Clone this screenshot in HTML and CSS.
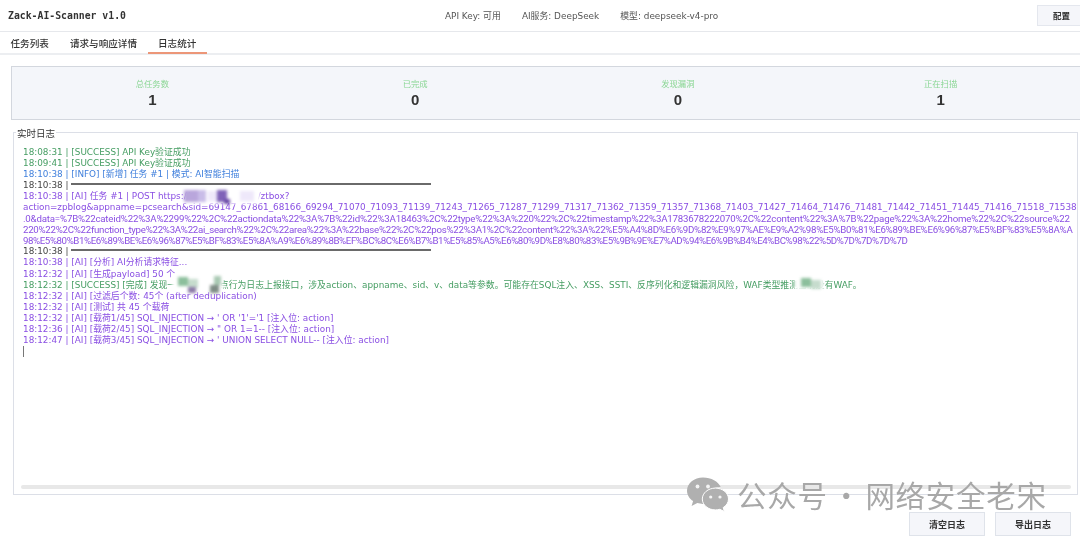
FILE: index.html
```html
<!DOCTYPE html>
<html lang="zh-CN">
<head>
<meta charset="utf-8">
<title>Zack-AI-Scanner v1.0</title>
<link rel="stylesheet" href="styles.css">
</head>
<body>
<div class="app">
  <header class="topbar">
    <h1 class="title">Zack-AI-Scanner v1.0</h1>
    <div class="status">
      <span class="status-item">API Key: 可用</span>
      <span class="status-item">AI服务: DeepSeek</span>
      <span class="status-item">模型: deepseek-v4-pro</span>
    </div>
    <button class="btn btn-config">配置</button>
  </header>
  <nav class="tabs">
    <span class="tab">任务列表</span>
    <span class="tab">请求与响应详情</span>
    <span class="tab tab-active">日志统计</span>
  </nav>
  <main class="content">
    <section class="stats">
      <div class="stat"><div class="stat-label">总任务数</div><div class="stat-value">1</div></div>
      <div class="stat"><div class="stat-label">已完成</div><div class="stat-value">0</div></div>
      <div class="stat"><div class="stat-label">发现漏洞</div><div class="stat-value">0</div></div>
      <div class="stat"><div class="stat-label">正在扫描</div><div class="stat-value">1</div></div>
    </section>
    <fieldset class="logbox">
      <legend class="logbox-title">实时日志</legend>
      <div class="log">
        <div class="line green">18:08:31 | [SUCCESS] API Key验证成功</div>
        <div class="line green">18:09:41 | [SUCCESS] API Key验证成功</div>
        <div class="line blue">18:10:38 | [INFO] [新增] 任务 #1 | 模式: AI智能扫描</div>
        <div class="line dark">18:10:38 | <span class="rule"></span></div>
        <div class="line purple">18:10:38 | [AI] 任务 #1 | POST https://a.example.com/ztbox?</div>
        <div class="line purple url-query">action=zpblog&amp;appname=pcsearch&amp;sid=69147_67861_68166_69294_71070_71093_71139_71243_71265_71287_71299_71317_71362_71359_71357_71368_71403_71427_71464_71476_71481_71442_71451_71445_71416_71518_71538</div>
        <div class="line purple enc enc-a">.0&amp;data=%7B%22cateid%22%3A%2299%22%2C%22actiondata%22%3A%7B%22id%22%3A18463%2C%22type%22%3A%220%22%2C%22timestamp%22%3A1783678222070%2C%22content%22%3A%7B%22page%22%3A%22home%22%2C%22source%22</div>
        <div class="line purple enc enc-b">220%22%2C%22function_type%22%3A%22ai_search%22%2C%22area%22%3A%22base%22%2C%22pos%22%3A1%2C%22content%22%3A%22%E5%A4%8D%E6%9D%82%E9%97%AE%E9%A2%98%E5%B0%81%E6%89%BE%E6%96%87%E5%BF%83%E5%8A%A</div>
        <div class="line purple enc enc-c">98%E5%80%B1%E6%89%BE%E6%96%87%E5%BF%83%E5%8A%A9%E6%89%8B%EF%BC%8C%E6%B7%B1%E5%85%A5%E6%80%9D%E8%80%83%E5%9B%9E%E7%AD%94%E6%9B%B4%E4%BC%98%22%5D%7D%7D%7D%7D</div>
        <div class="line dark">18:10:38 | <span class="rule"></span></div>
        <div class="line purple">18:10:38 | [AI] [分析] AI分析请求特征...</div>
        <div class="line purple">18:12:32 | [AI] [生成payload] 50 个</div>
        <div class="line green">18:12:32 | [SUCCESS] [完成] 发现一个AI 搜 索 点行为日志上报接口，涉及action、appname、sid、v、data等参数。可能存在SQL注入、XSS、SSTI、反序列化和逻辑漏洞风险，WAF类型推测当前没有WAF。</div>
        <div class="line purple">18:12:32 | [AI] [过滤后个数: 45个 (after deduplication)</div>
        <div class="line purple">18:12:32 | [AI] [测试] 共 45 个载荷</div>
        <div class="line purple">18:12:32 | [AI] [载荷1/45] SQL_INJECTION → ' OR '1'='1 [注入位: action]</div>
        <div class="line purple">18:12:36 | [AI] [载荷2/45] SQL_INJECTION → " OR 1=1-- [注入位: action]</div>
        <div class="line purple">18:12:47 | [AI] [载荷3/45] SQL_INJECTION → ' UNION SELECT NULL-- [注入位: action]</div>
        <div class="line"><span class="caret"></span></div>
      </div>
      <div class="scrollbar"></div>
    </fieldset>
    <footer class="actions">
      <button class="btn btn-action">清空日志</button>
      <button class="btn btn-action">导出日志</button>
    </footer>
  </main>

  <div class="mosaic mosaic-a">
    <i class="m1"></i><i class="m2"></i><i class="m3"></i><i class="m4"></i><i class="m5"></i><i class="m6"></i>
  </div>
  <div class="mosaic mosaic-b">
    <i class="g1"></i><i class="g2"></i><i class="g3"></i><i class="g4"></i><i class="g5"></i>
  </div>
  <div class="mosaic mosaic-c"><i class="g2"></i><i class="g1"></i></div>

  <div class="watermark">
    <svg class="wm-icon" viewBox="0 0 42 34" aria-hidden="true">
      <path class="wm-back" d="M16 0C7.2 0 0 5.900 0 13.200c0 4.200 2.400 8 6.100 10.400L4.600 28.500l5.700-2.900c1.800.5 3.700.8 5.700.8 1 0 1.900-.1 2.800-.2-.4-1.300-.6-2.600-.6-4 0-7 6.600-12.600 14.700-12.600h.8C31.300 3.900 24.300 0 16 0z"/>
      <path class="wm-front" d="M41.500 21.500c0-6-5.900-10.900-13.100-10.900s-13.100 4.900-13.100 10.900 5.900 10.900 13.100 10.900c1.500 0 3-.2 4.400-.6l4.600 2.200-1.200-3.900c3.200-2 5.300-5 5.300-8.600z"/>
      <circle class="wm-eye" cx="10.500" cy="9" r="1.900"/><circle class="wm-eye" cx="21" cy="9" r="1.900"/>
      <circle class="wm-eye" cx="23.700" cy="19.500" r="1.600"/><circle class="wm-eye" cx="33" cy="19.500" r="1.600"/>
    </svg>
    <span class="wm-text">公众号 · 网络安全老宋</span>
  </div>
</div>
</body>
</html>
```
FILE: styles.css
```css
* { box-sizing: border-box; }
html, body { margin: 0; padding: 0; background: #fff; }
body {
  width: 1080px;
  height: 540px;
  overflow: hidden;
  font-family: "Liberation Sans", "Noto Sans CJK SC", sans-serif;
  color: #333;
}
.app {
  position: relative;
  width: 1080px;
  height: 540px;
  display: flex;
  flex-direction: column;
  overflow: hidden;
  filter: blur(0.35px);
}
.topbar {
  height: 32px;
  flex: none;
  display: flex;
  align-items: center;
  padding: 0 0 0 8px;
  border-bottom: 1px solid #e6e8ec;
  position: relative;
}
.title {
  margin: 0;
  font-family: "DejaVu Sans Mono", "Noto Sans CJK SC", monospace;
  font-size: 9.8px;
  font-weight: 700;
  color: #333;
  width: 437px;
}
.status {
  display: flex;
  gap: 21px;
  font-family: "DejaVu Sans", "Noto Sans CJK SC", sans-serif;
  font-size: 8.9px;
  color: #555;
}
.btn {
  font-family: inherit;
  font-weight: 700;
  color: #333;
  background: #f5f6fa;
  border: 1px solid #e4e7ee;
  padding: 0;
  font-size: 8.5px;
}
.btn-config {
  width: 46px;
  height: 21px;
  margin-left: auto;
  margin-right: -3px;
  margin-top: -1px;
  text-align: left;
  padding-left: 15px;
}
.tabs {
  height: 23px;
  flex: none;
  display: flex;
  border-bottom: 2px solid #eceef1;
  font-size: 9.6px;
  color: #333;
}
.tab {
  padding: 5px 10.500px 0;
  height: 22px;
  font-weight: 500;
  line-height: 13px;
}
.tab-active { border-bottom: 2px solid #ec9678; }
.content {
  flex: 1;
  display: flex;
  flex-direction: column;
  padding: 11px 2px 4px 11px;
  min-height: 0;
}
.stats {
  flex: none;
  height: 54px;
  margin-right: -4px;
  padding: 0 10px 0 9px;
  display: grid;
  grid-template-columns: repeat(4, 1fr);
  background: #f4f6fa;
  border: 1px solid #d3d7de;
  border-right: 0;
  text-align: center;
}
.stat { padding-top: 11px; }
.stat-label { font-size: 8.3px; line-height: 12px; color: #8ad694; }
.stat-value { font-size: 15px; line-height: 17px; font-weight: 700; color: #333; margin-top: 1px; }
.logbox {
  flex: 1;
  min-height: 0;
  min-width: 0;
  margin: 6px 0 0 2px;
  padding: 3px 6px 5px 6px;
  border: 1px solid #dcdfe7;
  display: flex;
  flex-direction: column;
}
.logbox-title {
  font-size: 9.5px;
  line-height: 11px;
  color: #333;
  padding: 2px 1px 0;
  margin-left: -4px;
}
.log {
  flex: 1;
  min-height: 0;
  overflow: visible;
  padding: 5px 0 0 3px;
  font-family: "DejaVu Sans", "Noto Sans CJK SC", sans-serif;
  font-size: 8.85px;
  line-height: 11.06px;
  white-space: nowrap;
}
.line { height: 11.06px; }
.url-query { letter-spacing: -0.04px; }
.enc { font-family: Roboto, "Noto Sans CJK SC", sans-serif; font-size: 9.7px; }
.enc-a { letter-spacing: -0.19px; }
.enc-b { letter-spacing: -0.27px; }
.enc-c { letter-spacing: -0.41px; }
.green { color: #459d62; }
.blue { color: #3f7fdc; }
.purple { color: #8a4fe3; }
.dark { color: #444; }
.rule {
  display: inline-block;
  width: 360px;
  height: 2px;
  background: #6a6a6a;
  vertical-align: 3px;
}
.caret { display: inline-block; width: 1px; height: 11px; background: #777; }
.scrollbar {
  flex: none;
  height: 4px;
  margin: 0 0 0 1px;
  border-radius: 2px;
  background: #e8e8e8;
}
.actions {
  flex: none;
  height: 41px;
  display: flex;
  justify-content: flex-end;
  gap: 10px;
  padding: 17px 7px 0 0;
}
.btn-action { width: 76px; height: 24px; border: 1px solid #dfe3ea; font-size: 9px; }

.mosaic { position: absolute; filter: blur(1.5px); }
.mosaic i { position: absolute; display: block; }
.mosaic-a { left: 184px; top: 190px; width: 76px; height: 14px; background: #fff; }
.m1 { left: 0; top: 0; width: 14px; height: 12px; background: #b9a6dc; }
.m2 { left: 14px; top: 0; width: 8px; height: 12px; background: #c9bce8; }
.m3 { left: 24px; top: 1px; width: 9px; height: 10px; background: #eee8fa; }
.m4 { left: 33px; top: 0; width: 10px; height: 12px; background: #7f62b8; }
.m5 { left: 40px; top: 9px; width: 6px; height: 5px; background: #6a4aa8; }
.m6 { left: 56px; top: 1px; width: 14px; height: 10px; background: #eee8fa; }
.mosaic-b { left: 172px; top: 276px; width: 51px; height: 16px; background: #fff; }
.g1 { left: 6px; top: 1px; width: 10px; height: 9px; background: #8cbf9c; }
.g2 { left: 16px; top: 3px; width: 10px; height: 9px; background: #c6dccd; }
.g3 { left: 16px; top: 11px; width: 8px; height: 6px; background: #8d7ba8; }
.g4 { left: 38px; top: 9px; width: 9px; height: 8px; background: #7f8d86; }
.g5 { left: 42px; top: 0; width: 7px; height: 9px; background: #a9c9b3; }
.mosaic-c { left: 795px; top: 277px; width: 29px; height: 13px; background: #fff; }

.watermark {
  position: absolute;
  left: 687px;
  top: 477px;
  display: flex;
  align-items: center;
  gap: 8px;
  color: #a8a8a8;
}
.wm-icon { width: 42px; height: 35px; display: block; }
.wm-back, .wm-front { fill: #b0b0b0; }
.wm-front { stroke: #fff; stroke-width: 1; }
.wm-eye { fill: #f4f4f4; }
.wm-text {
  font-family: "Noto Sans CJK SC", sans-serif;
  font-size: 29.5px;
  font-weight: 400;
  letter-spacing: 0.7px;
  line-height: 35px;
  white-space: nowrap;
  word-spacing: -3.5px;
}
```
